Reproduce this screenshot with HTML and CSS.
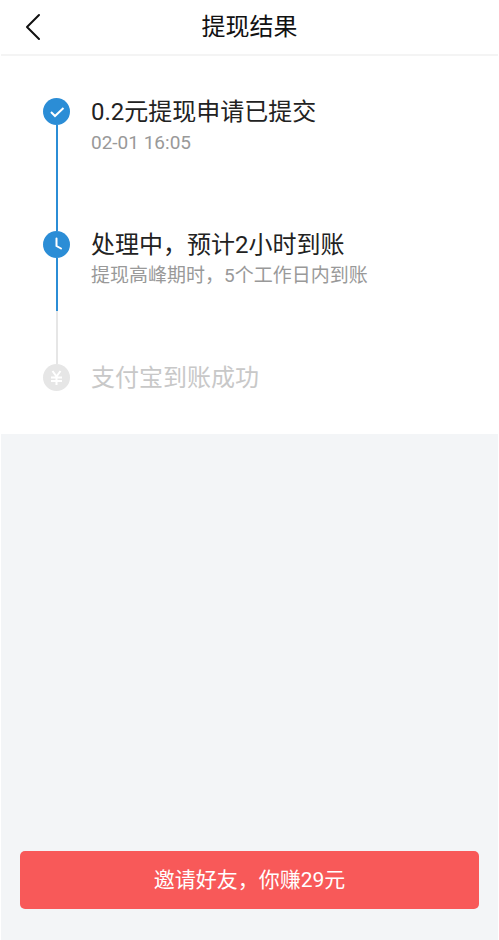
FILE: index.html
```html
<!DOCTYPE html>
<html lang="zh-CN">
<head>
    <meta charset="UTF-8">
    <meta name="viewport" content="width=device-width, initial-scale=1.0">
    <title>提现结果</title>
    <link rel="stylesheet" href="styles.css">
</head>
<body>
    <header class="navbar">
        <a href="#" class="back" aria-label="返回">
            <svg width="16" height="28" viewBox="0 0 16 28" fill="none" stroke="#111" stroke-width="2" stroke-linecap="round" stroke-linejoin="round">
                <path d="M14 2L2 14l12 12"/>
            </svg>
        </a>
        <h1>提现结果</h1>
    </header>

    <main>
        <ol class="steps">
            <li class="step">
                <div class="step-track">
                    <svg class="step-icon" viewBox="0 0 27 27" fill="none">
                        <circle cx="13.5" cy="13.5" r="13.5" fill="#2b8dd6"/>
                        <path d="M8 14l4 4 8.500-8" stroke="#fff" stroke-width="2"/>
                    </svg>
                    <span class="line"></span>
                </div>
                <div class="step-body">
                    <h2>0.2元提现申请已提交</h2>
                    <p>02-01 16:05</p>
                </div>
            </li>
            <li class="step">
                <div class="step-track">
                    <svg class="step-icon" viewBox="0 0 27 27" fill="none">
                        <circle cx="13.5" cy="13.5" r="13.5" fill="#2b8dd6"/>
                        <path d="M13.5 7.500v7.500l4.500 2.500" stroke="#fff" stroke-width="2" stroke-linecap="round"/>
                    </svg>
                    <span class="line"></span>
                    <span class="line line-pending"></span>
                </div>
                <div class="step-body">
                    <h2>处理中，预计2小时到账</h2>
                    <p>提现高峰期时，5个工作日内到账</p>
                </div>
            </li>
            <li class="step step-pending">
                <div class="step-track">
                    <svg class="step-icon" viewBox="0 0 27 27" fill="none">
                        <circle cx="13.5" cy="13.5" r="13.5" fill="#e6e6e6"/>
                        <path d="M9.500 7l4 5.500 4-5.500M8 13.500h11M8 17h11M13.500 12.500v8.500" stroke="#fff" stroke-width="2"/>
                    </svg>
                </div>
                <div class="step-body">
                    <h2>支付宝到账成功</h2>
                </div>
            </li>
        </ol>
    </main>

    <footer class="footer">
        <button type="button" class="invite">邀请好友，你赚29元</button>
    </footer>
</body>
</html>
```
FILE: styles.css
```css
* {
    box-sizing: border-box;
}

body {
    display: flex;
    flex-direction: column;
    min-height: 100vh;
    margin: 0;
    background-color: #f3f5f7;
    border: solid #fff;
    border-width: 0 1px;
    color: #222;
    font-family: Roboto, "Noto Sans CJK SC", sans-serif;
}

h1,
h2,
p {
    margin: 0;
    font-weight: 400;
}

/* 顶部导航 */
.navbar {
    display: grid;
    grid-template-columns: 48px 1fr 48px;
    align-items: center;
    height: 56px;
    background-color: #fff;
    border-bottom: 2px solid #f4f4f4;
}

.back {
    display: flex;
    padding-left: 24px;
}

.navbar h1 {
    color: #111;
    font-size: 24px;
    line-height: 32px;
    text-align: center;
}

/* 进度 */
.steps {
    margin: 0;
    padding: 42px 20px 42px 42px;
    background-color: #fff;
    list-style: none;
}

.step {
    display: flex;
    gap: 21px;
    min-height: 133px;
}

.step:last-child {
    min-height: 0;
}

.step-track {
    display: flex;
    flex-direction: column;
    align-items: center;
    width: 27px;
}

.step-icon {
    flex: none;
    width: 27px;
    height: 27px;
}

.line {
    flex: 1;
    width: 2px;
    background-color: #2b8dd6;
}

.line-pending {
    background-color: #e6e6e6;
}

.step-body h2 {
    font-size: 24px;
    line-height: 28px;
}

.step-body p {
    margin-top: 4px;
    color: #999;
    font-size: 19px;
    line-height: 26px;
}

.step-pending h2 {
    color: #c8c8c8;
}

/* 底部按钮 */
.footer {
    margin-top: auto;
    padding: 0 19px 31px;
}

.invite {
    display: block;
    width: 100%;
    height: 58px;
    padding: 0 0 4px;
    border: none;
    border-radius: 5px;
    background-color: #f85959;
    color: #fff;
    font-family: inherit;
    font-size: 21px;
    cursor: pointer;
}
```
